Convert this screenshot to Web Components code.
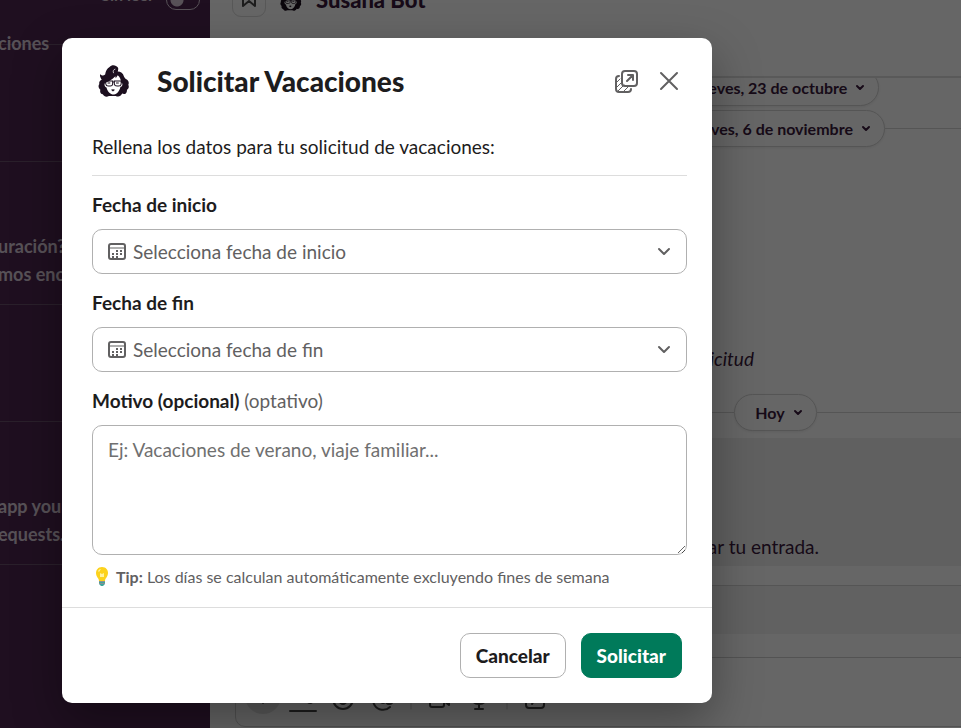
<!DOCTYPE html>
<html lang="es">
<head>
<meta charset="UTF-8">
<meta name="viewport" content="width=device-width, initial-scale=1">
<title>Solicitar Vacaciones</title>
<style>
    html, body {
        margin: 0;
        height: 100%;
        overflow: hidden;
    }
    body {
        font-family: Lato, "Liberation Sans", sans-serif;
        font-size: 19px;
        color: #1d1c1d;
    }
</style>
</head>
<body>
<app-shell>
    <side-bar slot="sidebar"></side-bar>
    <chat-view slot="main"></chat-view>
    <request-modal slot="modal" heading="Solicitar Vacaciones">
        <p slot="intro">Rellena los datos para tu solicitud de vacaciones:</p>
        <date-field label="Fecha de inicio" placeholder="Selecciona fecha de inicio"></date-field>
        <date-field label="Fecha de fin" placeholder="Selecciona fecha de fin"></date-field>
        <reason-field label="Motivo (opcional)" hint="(optativo)" placeholder="Ej: Vacaciones de verano, viaje familiar..."></reason-field>
        <tip-line><b>Tip:</b> Los días se calculan automáticamente excluyendo fines de semana</tip-line>
        <action-button slot="actions">Cancelar</action-button>
        <action-button slot="actions" primary>Solicitar</action-button>
    </request-modal>
</app-shell>

<script>
function define(name, html, setup) {
    const template = document.createElement('template');
    template.innerHTML = html;
    customElements.define(name, class extends HTMLElement {
        constructor() {
            super();
            this.attachShadow({ mode: 'open' });
            this.shadowRoot.appendChild(template.content.cloneNode(true));
        }

        connectedCallback() {
            if (setup) setup(this, this.shadowRoot);
        }
    });
}

define('app-shell', `
    <style>
        :host {
            display: grid;
            grid-template-columns: 210px minmax(0, 1fr);
            grid-template-rows: 100vh;
            position: relative;
        }
        .backdrop {
            position: absolute;
            inset: 0;
            background: rgba(0, 0, 0, 0.6);
            display: flex;
            align-items: flex-start;
            box-sizing: border-box;
            padding: 38px 24px 24px 62px;
        }
    </style>
    <slot name="sidebar"></slot>
    <slot name="main"></slot>
    <div class="backdrop"><slot name="modal"></slot></div>
`);

define('bot-face', `
    <style>
        :host { display: block; width: 32px; height: 32px; }
        svg { display: block; width: 100%; height: 100%; }
    </style>
    <svg viewBox="-1 0 92 94" aria-hidden="true">
        <path fill="#1c0f1f" d="M4 27c6 5 10 5 15 1 1-9 6-18 13-22C38-2 51-1 57 8c1 4 0 8-1 11 9 0 16 6 18 14 2 4 3 6 6 8 8 4 10 11 7 17 3 7 1 12-4 15 1 10-7 15-14 11-4 9-12 10-19 7H30c-7 4-14 2-18-5-7-1-9-8-7-13-6-5-7-12-3-17-2-6 2-11 7-13C5 38 3 32 4 27z"/>
        <path fill="#fff" d="M19 53c6-3 20-9 30-20l1 6 6-9c7 6 9 13 10 22 3 0 5 4 3 8-1 3-3 4-5 4-2 12-10 21-19 23-12-1-19-9-22-21-5-1-8-9-4-13z"/>
        <path fill="none" stroke="#fff" stroke-width="2" d="M44 24c-3-5-1-11 5-12"/>
        <path fill="none" stroke="#1c0f1f" stroke-width="3" d="M20 47h21v10q-1 5-7 5h-6q-6 0-7-6zM46 47h20v9q-1 6-7 6h-5q-7 0-8-6zM41 50h5M26 53h8M51 53h8"/>
        <path fill="#1c0f1f" d="M36 73l6-2 6 2-6 5z"/>
    </svg>
`);

define('side-bar', `
    <style>
        :host {
            display: block;
            overflow: hidden;
            background: #4e2650;
            color: #d9cbd9;
            font-weight: 700;
            line-height: 28px;
            font-size: 18px;
        }
        section {
            box-sizing: border-box;
            border-bottom: 1px solid #6a506b;
            white-space: nowrap;
        }
        .top { height: 64px; }
        .short { height: 117px; }
        .tall { height: 143px; padding-top: 70px; }
        p { margin: 0 0 0 -2px; }
        label {
            display: flex;
            justify-content: flex-end;
            align-items: center;
            gap: 12px;
            height: 28px;
            margin-top: -19px;
            padding-right: 10px;
            font-size: 16px;
        }
        input {
            appearance: none;
            box-sizing: border-box;
            width: 34px;
            height: 20px;
            margin: 9px 0 0;
            border: 1px solid #d9cbd9;
            border-radius: 10px;
            background: radial-gradient(circle at 10px 9px, #d9cbd9 6px, transparent 7px);
        }
        .top p { margin-top: 20px; }
    </style>
    <section class="top">
        <label for="unread">Sin leer <input type="checkbox" id="unread"></label>
        <p>ciones</p>
    </section>
    <section class="short"></section>
    <section class="tall"><p>uración?</p><p>mos enca</p></section>
    <section class="short"></section>
    <section class="tall"><p>app your</p><p>equests.</p></section>
`);

define('date-pill', `
    <style>
        :host {
            display: flex;
            align-items: center;
            flex: none;
        }
        :host([line])::before, :host([line])::after {
            content: "";
            flex: 1;
            height: 1px;
            background: #d4d4d4;
        }
        :host(:not([line])) { justify-content: center; }
        button {
            display: flex;
            align-items: center;
            gap: 8px;
            box-sizing: border-box;
            height: 37px;
            padding: 0 13px 0 20px;
            border: 1px solid #d4d4d4;
            border-radius: 19px;
            background: #fff;
            color: #3a1a3c;
            font: 700 16px/20px Lato, "Liberation Sans", sans-serif;
            box-shadow: 0 1px 3px rgba(0, 0, 0, 0.08);
        }
    </style>
    <button type="button">
        <slot></slot>
        <svg width="10" height="10" viewBox="0 0 10 10" fill="none" stroke="currentColor" stroke-width="2" stroke-linecap="round" stroke-linejoin="round"><path d="M2 3l3 3 3-3"/></svg>
    </button>
`);

define('chat-view', `
    <style>
        :host {
            display: flex;
            flex-direction: column;
            overflow: hidden;
            background: #fff;
            color: #3a1a3c;
        }
        header {
            display: flex;
            align-items: center;
            gap: 14px;
            box-sizing: border-box;
            height: 72px;
            flex: none;
            border-bottom: 2px solid #dedede;
            padding: 0 22px 76px;
        }
        header button {
            width: 34px;
            height: 34px;
            padding: 0;
            border: 1px solid #dcdcdc;
            border-radius: 9px;
            background: none;
            color: #4a4a4a;
        }
        header bot-face { width: 22px; height: 22px; }
        h1 {
            margin: 0;
            font-size: 22px;
            line-height: 28px;
            font-weight: 900;
        }
        /* the conversation runs on past the right edge of the window */
        .feed {
            flex: 1;
            min-height: 0;
            overflow: hidden;
            margin-right: -380px;
        }
        .first { margin-top: -9px; margin-bottom: 4px; }
        p { margin: 0; line-height: 28px; white-space: nowrap; }
        .note {
            padding: 198px 0 21px 478px;
            font-style: italic;
        }
        .message {
            box-sizing: border-box;
            height: 128px;
            margin-top: 7px;
            padding: 95px 0 0 445px;
            background: #f0f0f0;
        }
        .message p { line-height: 28px; }
        .band {
            height: 48px;
            margin-top: 19px;
            border-top: 1px solid #d4d4d4;
            background: #f3f3f3;
        }
        .composer {
            display: flex;
            align-items: flex-end;
            box-sizing: border-box;
            flex: none;
            height: 70px;
            margin: 0 -380px 1px 25px;
            padding: 0 0 12px 10px;
            border: 1px solid #cfcfcf;
            border-radius: 10px;
            color: #4a4a4a;
        }
        .composer svg { display: block; }
    </style>
    <header>
        <button type="button" aria-label="Guardar"><svg width="20" height="20" viewBox="0 0 20 20" fill="none" stroke="currentColor" stroke-width="2" stroke-linejoin="round"><path d="M4 2h12v15l-6-5-6 5z"/></svg></button>
        <bot-face></bot-face>
        <h1>Susana Bot</h1>
    </header>
    <div class="feed">
        <date-pill class="first">Jueves, 23 de octubre</date-pill>
        <date-pill line>Jueves, 6 de noviembre</date-pill>
        <p class="note">solicitud</p>
        <date-pill line>Hoy</date-pill>
        <div class="message"><p>registrar tu entrada.</p></div>
        <div class="band"></div>
    </div>
    <div class="composer">
        <svg width="320" height="36" viewBox="0 0 320 36" fill="none" stroke="currentColor" stroke-width="2" stroke-linecap="round" stroke-linejoin="round" aria-hidden="true">
            <circle cx="17" cy="18" r="18" fill="#e4e4e4" stroke="none"/>
            <path d="M17 11v14M10 18h14"/>
            <path d="M46 24l6-15 6 15M48 19h8M68 24v-9M68 19a4 5 0 1 0 0 2M44 33h26"/>
            <circle cx="97" cy="21" r="10"/><path d="M92 22q5 8 10 0M93 17v1M101 17v1"/>
            <path d="M144 29a10 10 0 1 1 3-8q0 5-4 5-3 0-3-4v-5"/><circle cx="137" cy="21" r="4"/>
            <path d="M165 4v27M261 4v27" stroke="#cfcfcf" stroke-width="1"/>
            <rect x="184" y="14" width="14" height="15" rx="2"/><path d="M198 20l5-4v11l-5-4"/>
            <rect x="229" y="9" width="8" height="13" rx="4"/><path d="M226 19q0 7 7 7t7-7M233 26v5M229 31h8"/>
            <rect x="280" y="12" width="18" height="18" rx="3"/><path d="M286 26l6-10"/>
        </svg>
    </div>
`);

define('request-modal', `
    <style>
        :host {
            display: block;
            flex: 0 1 650px;
            background: #fff;
            border-radius: 10px;
            box-shadow: 0 18px 48px rgba(0, 0, 0, 0.35);
            color: #1d1c1d;
        }
        header {
            display: flex;
            align-items: center;
            height: 86px;
            padding: 0 30px 0 36px;
        }
        h2 {
            flex: 1;
            margin: 0 0 0 27px;
            font-size: 28px;
            line-height: 36px;
            font-weight: 900;
        }
        header button {
            display: flex;
            padding: 0;
            border: 0;
            background: none;
            color: #616061;
        }
        .close { margin-left: 18px; }
        .body { padding: 0 25px 18px 30px; }
        ::slotted(p) {
            margin: 0 0 15px;
            padding: 9px 0 14px;
            border-bottom: 1px solid #dddddd;
            line-height: 28px;
        }
        footer {
            display: flex;
            justify-content: flex-end;
            gap: 15px;
            padding: 25px 30px;
            border-top: 1px solid #dddddd;
        }
    </style>
    <header>
        <bot-face></bot-face>
        <h2></h2>
        <button type="button" aria-label="Abrir en ventana nueva">
            <svg width="25" height="25" viewBox="0 0 25 25" fill="none" stroke="currentColor" stroke-width="2" stroke-linecap="round" stroke-linejoin="round">
                <rect x="8" y="2" width="15" height="15" rx="3"/>
                <path d="M13 12l6-6M14 6h5v5"/>
                <path d="M5 7q-3 0-3 3v10q0 3 3 3h9q3 0 3-3"/>
                <path d="M2 14l4-4M2 19l5-5M4 22l6-6M9 23l5-5" stroke-width="1"/>
            </svg>
        </button>
        <button type="button" class="close" aria-label="Cerrar">
            <svg width="25" height="25" viewBox="0 0 25 25" fill="none" stroke="currentColor" stroke-width="2" stroke-linecap="round"><path d="M4 4l16 16M20 4L4 20"/></svg>
        </button>
    </header>
    <div class="body"><slot name="intro"></slot><slot></slot></div>
    <footer><slot name="actions"></slot></footer>
`, (el, root) => {
    root.querySelector('h2').textContent = el.getAttribute('heading');
});

define('date-field', `
    <style>
        :host { display: block; margin-bottom: 15px; }
        label {
            display: block;
            font-weight: 700;
            line-height: 28px;
            margin-bottom: 10px;
        }
        .box {
            display: flex;
            align-items: center;
            box-sizing: border-box;
            height: 45px;
            padding: 0 14px;
            border: 1px solid #b0b0b0;
            border-radius: 10px;
            color: #616061;
        }
        select {
            appearance: none;
            flex: 1;
            min-width: 0;
            height: 43px;
            margin-left: 7px;
            padding: 0;
            border: 0;
            outline: 0;
            background: none;
            color: inherit;
            font: inherit;
        }
    </style>
    <label for="date"></label>
    <div class="box">
        <svg width="19" height="19" viewBox="0 0 19 19" fill="none" stroke="currentColor" stroke-width="2">
            <rect x="2" y="2" width="16" height="15" rx="2"/>
            <path d="M2 6h16" stroke-width="1"/>
            <path d="M9 9h6M5 12h10M5 15h8" stroke-dasharray="2 2"/>
        </svg>
        <select id="date"><option></option></select>
        <svg width="16" height="16" viewBox="0 0 16 16" fill="none" stroke="currentColor" stroke-width="2" stroke-linecap="round" stroke-linejoin="round"><path d="M3 5l5 5 5-5"/></svg>
    </div>
`, (el, root) => {
    root.querySelector('label').textContent = el.getAttribute('label');
    root.querySelector('option').textContent = el.getAttribute('placeholder');
});

define('reason-field', `
    <style>
        :host { display: block; }
        label {
            display: block;
            line-height: 28px;
            margin-bottom: 10px;
            color: #616061;
        }
        b { font-weight: 700; color: #1d1c1d; }
        textarea {
            display: block;
            box-sizing: border-box;
            width: 100%;
            height: 130px;
            padding: 10px 15px;
            border: 1px solid #b0b0b0;
            border-radius: 10px;
            outline: 0;
            resize: vertical;
            font: inherit;
            line-height: 28px;
        }
        textarea::placeholder { color: #707070; opacity: 1; }
    </style>
    <label for="reason"><b></b> <span></span></label>
    <textarea id="reason"></textarea>
`, (el, root) => {
    root.querySelector('b').textContent = el.getAttribute('label');
    root.querySelector('span').textContent = el.getAttribute('hint');
    root.querySelector('textarea').placeholder = el.getAttribute('placeholder');
});

define('tip-line', `
    <style>
        :host {
            display: flex;
            align-items: center;
            gap: 5px;
            margin-top: 9px;
            font-size: 16px;
            line-height: 25px;
            color: #616061;
        }
        svg { flex: none; }
    </style>
    <svg width="19" height="20" viewBox="0 0 19 20" aria-hidden="true">
        <path fill="#fcd21d" d="M10 0c4 0 6 3 6 6 0 4-3 5-3 8H7c0-3-3-4-3-8 0-3 2-6 6-6z"/>
        <path fill="#fff2a0" d="M8 6l2 1 2-1v4H8zM6 4q1-2 3-2l-2 3z"/>
        <path fill="#3fa79b" d="M7 14h6v3l-2 2H9l-2-2z"/>
        <path fill="#8a8f94" d="M7 14h6v1H7zM7 16h6v1H7z"/>
    </svg>
    <span><slot></slot></span>
`);

define('action-button', `
    <style>
        :host { display: block; }
        button {
            box-sizing: border-box;
            height: 45px;
            padding: 0 15px;
            border: 1px solid #b0b0b0;
            border-radius: 10px;
            background: #fff;
            color: #1d1c1d;
            font: inherit;
            font-weight: 900;
        }
        :host([primary]) button {
            border-color: #007a5a;
            background: #007a5a;
            color: #fff;
        }
    </style>
    <button type="button"><slot></slot></button>
`);
</script>
</body>
</html>
